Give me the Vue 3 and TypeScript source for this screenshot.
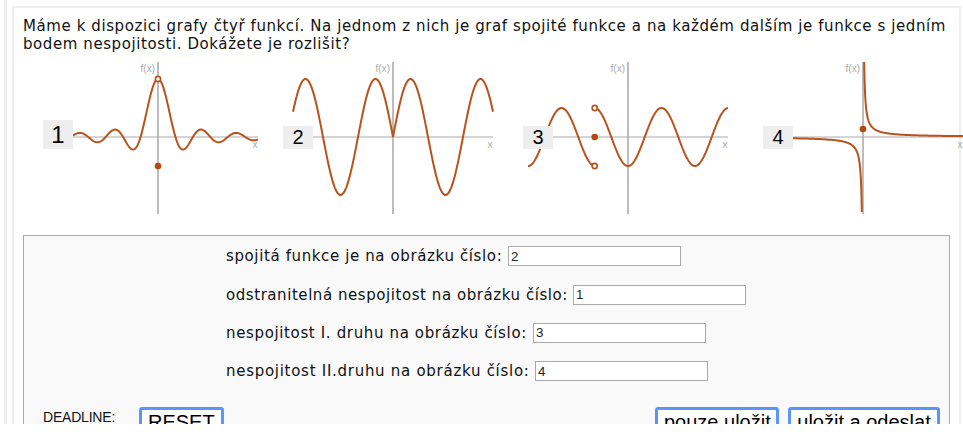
<script setup lang="ts">
interface Chart {
  id: number
  left: number
  top: number
  height: number
  size: number
  paths: string[]
  filled: [number, number][]
  open: [number, number][]
}

const AXIS_X = 100
const AXIS_Y = 75

function trace(from: number, to: number, fn: (x: number) => number): string {
  const points: string[] = []
  for (let x = from; x <= to + 0.001; x += 0.5) {
    points.push(`${x.toFixed(1)},${fn(x).toFixed(2)}`)
  }
  return 'M' + points.join('L')
}

const sinc = (x: number) => {
  const t = (x - AXIS_X) * 0.18
  return AXIS_Y - 58 * (Math.abs(t) < 1e-6 ? 1 : Math.sin(t) / t)
}
const wave2 = (x: number) => AXIS_Y - 58 * Math.sin(((2 * Math.PI) / 70) * Math.abs(x - AXIS_X))
const k3 = (2 * Math.PI) / 67
const wave3r = (x: number) => AXIS_Y + 29 * Math.cos(k3 * (x - AXIS_X))
const wave3l = (x: number) => AXIS_Y + 29 * Math.cos(k3 * x)
const hypR = (x: number) => AXIS_Y - 90 / (x - AXIS_X)
const hypL = (x: number) => AXIS_Y + 90 / (AXIS_X - x)

function hyperbola(from: number, to: number, fn: (x: number) => number): string {
  const points: string[] = []
  const steps = 160
  const ratio = Math.pow(to / from, 1 / steps)
  for (let i = 0, d = from; i <= steps; i++, d *= ratio) {
    const x = fn === hypR ? AXIS_X + d : AXIS_X - d
    points.push(`${x.toFixed(2)},${fn(x).toFixed(2)}`)
  }
  return 'M' + points.join('L')
}

const charts: Chart[] = [
  { id: 1, left: -15, top: 58, height: 29, size: 24, paths: [trace(15, 200, sinc)], filled: [[100, 104]], open: [[100, 17]] },
  { id: 2, left: -10, top: 64, height: 23, size: 20, paths: [trace(0, 200, wave2)], filled: [], open: [] },
  {
    id: 3, left: -5, top: 64, height: 23, size: 20,
    paths: [trace(0, 66.5, wave3l), trace(66.5, 200, wave3r)],
    filled: [[66.7, 75]],
    open: [[66.7, 46], [66.7, 104]],
  },
  {
    id: 4, left: 0, top: 64, height: 23, size: 20,
    paths: [hyperbola(1.2, 100, hypL), hyperbola(1.2, 100, hypR)],
    filled: [[100, 67]],
    open: [],
  },
]

const rows = [
  { label: 'spojitá funkce je na obrázku číslo:', value: '2', width: 282, spacing: 0.62 },
  { label: 'odstranitelná nespojitost na obrázku číslo:', value: '1', width: 347, spacing: 0.56 },
  { label: 'nespojitost I. druhu na obrázku číslo:', value: '3', width: 307, spacing: 0.64 },
  { label: 'nespojitost II.druhu na obrázku číslo:', value: '4', width: 309, spacing: 0.72 },
]
</script>

<template>
  <div class="page">
    <div class="card">
      <p class="intro">Máme k dispozici grafy čtyř funkcí. Na jednom z nich je graf spojité funkce a na každém dalším je funkce s jedním bodem nespojitosti. Dokážete je rozlišit?</p>

      <div class="charts">
        <div v-for="c in charts" :key="c.id" class="chart">
          <svg viewBox="0 0 200 152" width="200" height="152" class="plot">
            <line x1="100" y1="0" x2="100" y2="152" class="axis-y" />
            <line x1="0" y1="75" x2="200" y2="75" class="axis-x" />
            <text x="97" y="10" text-anchor="end" class="tick">f(x)</text>
            <text x="197" y="86" text-anchor="middle" class="tick">x</text>
            <path v-for="(d, i) in c.paths" :key="i" :d="d" class="curve" />
            <circle v-for="(p, i) in c.filled" :key="'f' + i" :cx="p[0]" :cy="p[1]" r="3.3" class="dot" />
            <circle v-for="(p, i) in c.open" :key="'o' + i" :cx="p[0]" :cy="p[1]" r="2.6" class="hole" />
          </svg>
          <span
            class="num"
            :style="{ left: c.left + 'px', top: c.top + 'px', height: c.height + 'px', lineHeight: c.height + 'px', fontSize: c.size + 'px' }"
          >{{ c.id }}</span>
        </div>
      </div>

      <form class="answers" @submit.prevent>
        <div v-for="r in rows" :key="r.value" class="row">
          <label class="row-label" :style="{ width: r.width + 'px', letterSpacing: r.spacing + 'px' }">{{ r.label }}</label>
          <input class="field" type="text" :value="r.value" />
        </div>
        <div class="actions">
          <span class="deadline">DEADLINE:</span>
          <button type="button" class="btn">RESET</button>
          <span class="spacer"></span>
          <button type="button" class="btn btn-save">pouze uložit</button>
          <button type="button" class="btn btn-send">uložit a odeslat</button>
        </div>
      </form>
    </div>
  </div>
</template>

<style scoped>
.page {
  box-sizing: border-box;
  width: 963px;
  height: 424px;
  overflow: hidden;
  padding: 6px 0 0 12px;
  background: #fff;
  background-image: linear-gradient(#eee, #eee);
  background-size: 3px 100%;
  background-position: 4px 0;
  background-repeat: no-repeat;
  font-family: "DejaVu Sans", Verdana, sans-serif;
  color: #111;
}
.card {
  box-sizing: border-box;
  width: 949px;
  min-height: 500px;
  border: 2px solid #eee;
  padding: 9px 9px 0 9px;
}
.intro {
  margin: 0 4px 0 0;
  font-size: 15px;
  letter-spacing: 0.58px;
  line-height: 18px;
  text-align: justify;
}
.charts {
  display: flex;
  gap: 35px;
  margin: 9px 0 0 35px;
  width: 1000px;
}
.chart {
  position: relative;
  width: 200px;
  height: 152px;
  flex: none;
}
.plot {
  display: block;
  overflow: visible;
}
.axis-y {
  stroke: #bdbdbd;
  stroke-width: 2;
}
.axis-x {
  stroke: #aaa;
  stroke-width: 1;
}
.tick {
  font-family: "Liberation Sans", Arial, sans-serif;
  font-size: 10px;
  fill: #aaa;
}
.curve {
  fill: none;
  stroke: #b8531d;
  stroke-width: 2;
}
.dot {
  fill: #b5480f;
}
.hole {
  fill: #fff;
  stroke: #b8531d;
  stroke-width: 1.6;
}
.num {
  position: absolute;
  width: 30px;
  background: #eee;
  color: #000;
  text-align: center;
  font-family: "Liberation Sans", Arial, sans-serif;
}
.answers {
  box-sizing: border-box;
  margin: 21px 0 0;
  height: 260px;
  border: 1px solid #aaa;
  background: #f9f9f9;
  padding: 10.3px 9px 0 19px;
}
.row {
  display: flex;
  align-items: center;
  height: 20px;
  margin: 0 0 18.3px 183px;
  font-size: 15px;
}
.row-label {
  flex: none;
  white-space: nowrap;
}
.field {
  box-sizing: border-box;
  width: 173px;
  height: 20px;
  border: 1px solid #aaa;
  background: #fff;
  padding: 1px 2px;
  font-family: "Liberation Sans", Arial, sans-serif;
  font-size: 13.33px;
  color: #222;
}
.actions {
  display: flex;
  align-items: flex-start;
  gap: 9px;
  margin-top: 26.2px;
}
.deadline {
  width: 87px;
  margin-top: 2px;
  font-family: "Liberation Sans", Arial, sans-serif;
  font-size: 14px;
  letter-spacing: -0.2px;
  line-height: 16px;
}
.spacer {
  flex: 1;
}
.btn {
  box-sizing: border-box;
  height: 30px;
  border: 3px solid #5b95f9;
  border-radius: 3px;
  background: #fff;
  padding: 0 6px;
  font-family: "Liberation Sans", Arial, sans-serif;
  font-size: 20px;
  line-height: 23px;
  color: #000;
  white-space: nowrap;
}
.btn-save {
  width: 124px;
}
.btn-send {
  width: 152px;
}
</style>
